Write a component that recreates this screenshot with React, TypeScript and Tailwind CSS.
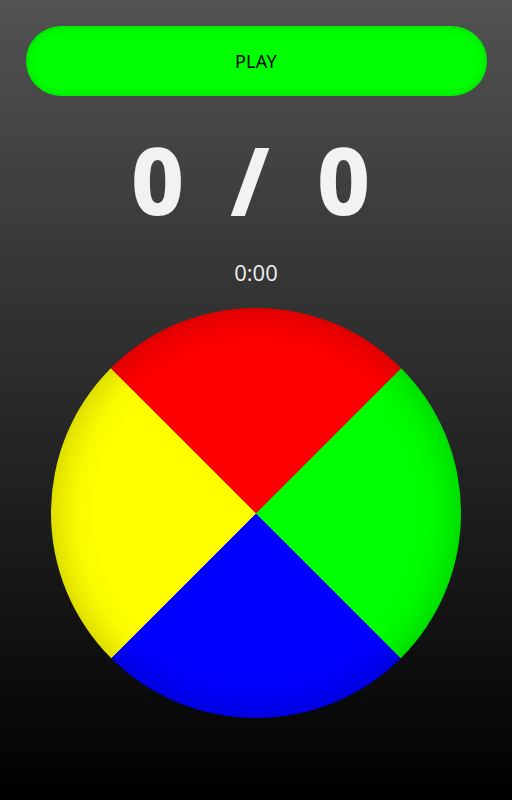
import React from "react";

export default function App() {
  return (
    <div className="w-[512px] h-[800px] bg-[linear-gradient(to_bottom,#525252,#000000)] flex flex-col items-center overflow-hidden" style={{ fontFamily: "'Open Sans', 'Noto Sans', sans-serif" }}>
      <button className="mt-[26px] w-[461px] h-[70px] rounded-full bg-[#00ff00] shadow-[inset_0_0_12px_rgba(0,0,0,0.15)] text-black text-[18px] tracking-[0.3px] flex items-center justify-center" style={{ fontFamily: "'Noto Sans', sans-serif" }}>
        PLAY
      </button>
      <div className="mt-[32px] mr-[12px] h-[104px] flex items-center justify-center text-[#f2f2f2] font-extrabold text-[92px] leading-none gap-[41px]" style={{ fontFamily: "'Noto Sans', sans-serif" }}>
        <span className="w-[52px] text-center">0</span>
        <span className="w-[52px] text-center">/</span>
        <span className="w-[52px] text-center">0</span>
      </div>
      <div className="mt-[25px] text-[22px] leading-[30px] text-[#f0f0f0]">0:00</div>
      <div className="mt-[21px] w-[410px] h-[410px] rounded-full bg-[conic-gradient(from_-45deg,#ff0000_0deg_90deg,#00ff00_90deg_180deg,#0000ff_180deg_270deg,#ffff00_270deg_360deg)] shadow-[inset_0_0_40px_rgba(0,0,0,0.25)]" />
    </div>
  );
}
